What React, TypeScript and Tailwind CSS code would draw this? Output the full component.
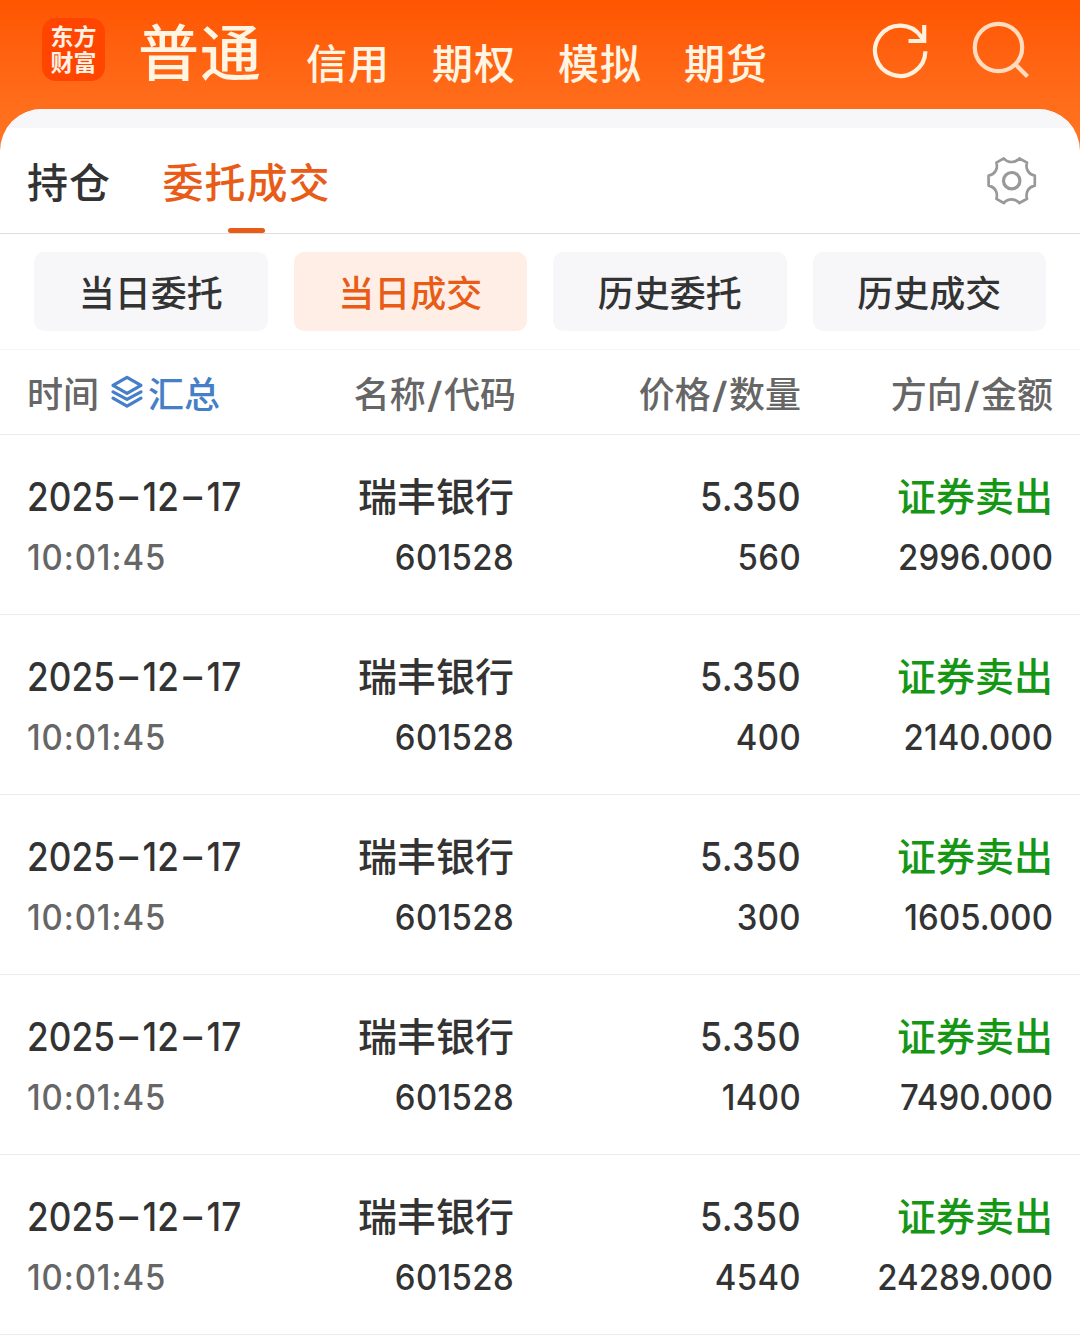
const accounts = ["信用", "期权", "模拟", "期货"];

const filters = [
  { label: "当日委托", active: false },
  { label: "当日成交", active: true },
  { label: "历史委托", active: false },
  { label: "历史成交", active: false },
];

const trades = [
  { volume: "560", amount: "2996.000" },
  { volume: "400", amount: "2140.000" },
  { volume: "300", amount: "1605.000" },
  { volume: "1400", amount: "7490.000" },
  { volume: "4540", amount: "24289.000" },
];

function RefreshIcon() {
  return (
    <svg width="60" height="60" viewBox="0 0 60 60" fill="none" stroke="#fff1de" strokeWidth="4.2">
      <path d="M54.4 30.2A25.2 25.2 0 1 1 50 15.5L52.5 19" />
      <path d="M53.2 4V20H37.5" />
    </svg>
  );
}

function SearchIcon() {
  return (
    <svg width="60" height="60" viewBox="0 0 60 60" fill="none" stroke="#ffdcc0" strokeWidth="4.2">
      <circle cx="26.5" cy="26.5" r="23.7" />
      <path d="M43 43L55.5 55.5" />
    </svg>
  );
}

function GearIcon() {
  return (
    <svg width="50" height="50" viewBox="0 0 50 50" fill="none" stroke="#999" strokeWidth="2.7" strokeLinejoin="round">
      <path d="M16.8 2.3C21 7.2 28.2 7.2 32.4 2.3L40 6.6C38.2 13 41.5 18.4 47.8 19.6V29.6C41.5 30.8 38.2 36.4 40 42.8L32.4 47C28.2 42.2 21 42.2 16.8 47L9.4 42.8C11.2 36.4 8 30.8 1.6 29.6V19.6C8 18.4 11.2 13 9.4 6.6Z" />
      <circle cx="24.7" cy="24.7" r="8.2" strokeWidth="3.2" />
    </svg>
  );
}

function LayersIcon() {
  return (
    <svg width="34" height="34" viewBox="0 0 34 34" fill="none" stroke="#447fc8" strokeWidth="3.2" strokeLinejoin="round" strokeLinecap="round">
      <path d="M17 2.3L31 10.3L17 18.3L3 10.3Z" />
      <path d="M3 16.8L17 24.4L31 16.8" />
      <path d="M3 23.2L17 31.2L31 23.2" />
    </svg>
  );
}

function Dash() {
  return <span className="mr-[6.5px] ml-[6px] inline-block -translate-y-[1.5px] scale-x-[1.65]">-</span>;
}

function Slash() {
  return <span className="mx-[2.5px] inline-block scale-x-120">/</span>;
}

export default function App() {
  return (
    <div className="h-[1335px] w-[1080px] overflow-hidden bg-linear-to-b from-[#ff5500] from-0% to-[#ff721f] to-[130px] font-['Inter','Noto_Sans_CJK_SC',sans-serif] font-medium whitespace-nowrap text-[#333]">
      {/* Header */}
      <header className="flex h-[109px] pl-[42px]">
        <div className="mt-[18px] flex h-[63px] w-[63px] flex-col items-center justify-center rounded-[14px] bg-[#ff4500] text-[23px] leading-[26px] font-bold text-[#fff1e4]">
          <span>东方</span>
          <span>财富</span>
        </div>
        <h1 className="mt-[9px] ml-[33px] w-[168px] text-[61px] leading-[90px] font-medium tracking-[1px] text-[#fff5e2]">普通</h1>
        <nav className="mt-[33px] flex gap-[42px] text-[41px] leading-[62px] tracking-[1px] text-[#fff5e2]">
          {accounts.map((name) => (
            <span key={name}>{name}</span>
          ))}
        </nav>
        <div className="mt-[21px] ml-[103px] flex gap-[41px]">
          <RefreshIcon />
          <SearchIcon />
        </div>
      </header>

      <main className="h-[1226px] overflow-hidden rounded-t-[42px] bg-white">
        <div className="h-[19px] bg-[#f7f7fa]" />

        {/* Tabs */}
        <div className="flex h-[106px] items-start border-b border-[#dedede] pl-[27px] text-[41px] leading-[62px] tracking-[1px]">
          <span className="mt-[24px] w-[136px]">持仓</span>
          <div className="flex h-[105px] w-[166px] flex-col items-center text-[#e85c17]">
            <span className="mt-[24px] h-[76px] pl-px">委托成交</span>
            <i className="h-[5px] w-[37px] rounded-full bg-[#e85c17]" />
          </div>
          <div className="mt-[28px] ml-auto mr-[43px]">
            <GearIcon />
          </div>
        </div>

        {/* Filters */}
        <div className="grid h-[116px] grid-cols-4 gap-[26px] border-b border-[#f5f5f5] px-[34px] pt-[18px] text-[36px] leading-[84px]">
          {filters.map((item) => (
            <button
              key={item.label}
              className={
                item.active
                  ? "h-[79px] rounded-[10px] bg-[#ffeee6] text-[#e85c17]"
                  : "h-[79px] rounded-[10px] bg-[#f7f7fa]"
              }
            >
              {item.label}
            </button>
          ))}
        </div>

        {/* Column titles */}
        <div className="flex h-[85px] border-b border-[#ebebeb] pr-[27px] pl-[27px] text-[36px] leading-[90px] text-[#666]">
          <div className="flex h-[85px] w-[240px]">
            <span>时间</span>
            <span className="mt-[25px] mr-[4px] ml-[11px]">
              <LayersIcon />
            </span>
            <span className="text-[#447fc8]">汇总</span>
          </div>
          <span className="w-[249px] text-right">名称<Slash />代码</span>
          <span className="w-[285px] text-right">价格<Slash />数量</span>
          <span className="flex-1 text-right">方向<Slash />金额</span>
        </div>

        {/* Trades */}
        {trades.map((trade) => (
          <div key={trade.amount} className="flex h-[180px] border-b border-[#ebebeb] px-[27px] pt-[31px] text-[35px] leading-[61px] tracking-[0.4px]">
            <div className="w-[240px]">
              <p className="origin-left scale-x-90 text-[39px] tracking-[0.1px]">
                2025<Dash />12<Dash />17
              </p>
              <p className="origin-left scale-x-94 tracking-[1px] text-[#666]">10:01:45</p>
            </div>
            <div className="w-[247px] text-right">
              <p className="text-[39px] tracking-normal">瑞丰银行</p>
              <p className="origin-right scale-x-94">601528</p>
            </div>
            <div className="w-[287px] text-right">
              <p className="origin-right scale-x-92 text-[39px]">5.350</p>
              <p className="origin-right scale-x-94">{trade.volume}</p>
            </div>
            <div className="flex-1 text-right">
              <p className="text-[39px] tracking-normal text-[#159615]">证券卖出</p>
              <p className="origin-right scale-x-94 tracking-[0.1px]">{trade.amount}</p>
            </div>
          </div>
        ))}
      </main>
    </div>
  );
}
